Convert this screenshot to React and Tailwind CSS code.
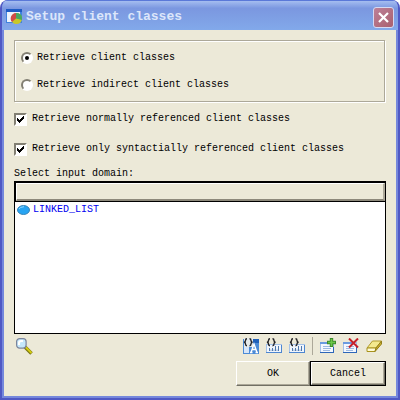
import { useState } from "react";

function AppIcon() {
  return (
    <svg width="16" height="16" viewBox="0 0 16 16" aria-hidden="true">
      <rect x="0" y="0" width="16" height="14" fill="#3f83dd" />
      <rect x="0" y="0" width="16" height="3" fill="#1f5bc4" />
      <rect x="1" y="3" width="13" height="10" fill="#eef3fc" />
      <circle cx="10.500" cy="9.500" r="5.500" fill="#c9c829" />
      <path d="M10 9.500V4A5.500 5.500 0 0 0 6 13Z" fill="#cf4a48" />
      <path d="M10 9.500V4A5.500 5.500 0 0 1 16 11Z" fill="#48a860" />
    </svg>
  );
}

function CloseIcon() {
  return (
    <svg width="11" height="11" viewBox="0 0 11 11" aria-hidden="true">
      <path d="M1 1L10 10M10 1L1 10" stroke="#fff" strokeWidth="2.2" />
    </svg>
  );
}

function EllipseIcon() {
  return (
    <svg width="13" height="10" viewBox="0 0 13 10" aria-hidden="true">
      <ellipse cx="6.5" cy="5" rx="6" ry="4.5" fill="#27a4f2" stroke="#3b86b8" />
      <path d="M2 4Q3 2 7 1.700" stroke="#8fd8ff" fill="none" />
    </svg>
  );
}

function SearchIcon() {
  return (
    <svg width="17" height="17" viewBox="0 0 17 17" aria-hidden="true">
      <path d="M9 9L15.500 15.500" stroke="#77720e" strokeWidth="3.6" />
      <path d="M9.500 9L15.500 15" stroke="#d3cb12" strokeWidth="2" />
      <rect x="0.600" y="0.600" width="9.500" height="9.500" rx="3" fill="#c5e8fb" stroke="#7c859c" strokeWidth="1.2" />
      <path d="M3 7V5Q3 3 5.500 3H7" stroke="#fff" strokeWidth="2" fill="none" />
    </svg>
  );
}

function Braces() {
  return (
    <g fill="none" stroke="#222226" strokeWidth="1.4">
      <path d="M4 0.800Q2.500 0.800 2.500 2.500Q2.500 4 1 4.200Q2.500 4.500 2.500 6Q2.500 7.700 4 7.700" />
      <path d="M6.500 0.800Q8 0.800 8 2.500Q8 4 9.500 4.200Q8 4.500 8 6Q8 7.700 6.500 7.700" />
    </g>
  );
}

function ClassTextIcon() {
  return (
    <svg width="16" height="16" viewBox="0 0 16 16" aria-hidden="true">
      <rect x="0" y="1" width="16" height="15" fill="#4b8ad6" />
      <rect x="10" y="1" width="6" height="4" fill="#1f5fb8" />
      <rect x="1" y="0" width="9" height="9" fill="#e4e9ea" />
      <rect x="1" y="9" width="5" height="6" fill="#d6e5f8" />
      <path d="M8 14.500L11 6L14 14.500M9 11.500H13M7 14.500H9.500M12.500 14.500H15" stroke="#fff" strokeWidth="1.4" fill="none" />
      <Braces />
    </svg>
  );
}

function ClassRulerIcon() {
  return (
    <svg width="16" height="16" viewBox="0 0 16 16" aria-hidden="true">
      <rect x="0.500" y="6.500" width="15" height="8" fill="#f0f5fc" stroke="#a4c1e8" />
      <path d="M0 14.500H16M15.500 7V15" stroke="#4d86d0" />
      <path d="M3.500 10V13M6.500 10V13M9.500 8V13M12.500 8V13" stroke="#4f78ac" />
      <path d="M5 11.500V13M8 11.500V13M11 11.500V13" stroke="#8fabd0" />
      <Braces />
    </svg>
  );
}

function ListLines() {
  return (
    <g>
      <rect x="0.500" y="4.500" width="13" height="10" fill="#f4f8fe" stroke="#a3bfe8" />
      <rect x="0" y="4" width="9" height="2" fill="#6a9be0" />
      <path d="M0 14.500H14M13.500 9V15" stroke="#2d66b8" />
      <path d="M3 8.500H11M3 10.500H11M3 12.500H10" stroke="#9cb9e2" />
    </g>
  );
}

function AddIcon() {
  return (
    <svg width="16" height="16" viewBox="0 0 16 16" aria-hidden="true">
      <ListLines />
      <path d="M11.500 0V9M7 4.500H16" stroke="#3a8a2a" strokeWidth="3.4" />
      <path d="M11.500 1V8M8 4.500H15" stroke="#6cc748" strokeWidth="1.6" />
    </svg>
  );
}

function RemoveIcon() {
  return (
    <svg width="16" height="16" viewBox="0 0 16 16" aria-hidden="true">
      <ListLines />
      <path d="M6 0.500L15 9.500M15 0.500L6 9.500" stroke="#c5202a" strokeWidth="2" />
    </svg>
  );
}

function EraserIcon() {
  return (
    <svg width="17" height="16" viewBox="0 0 17 16" aria-hidden="true">
      <path d="M1 10L6.500 3H15.500L10 10Z" fill="#f3e98e" stroke="#b09a2c" />
      <path d="M1 10H10L9 13.500H1Z" fill="#fffbd6" stroke="#a8921c" />
      <path d="M10 10L15.500 3V6L9 13.500Z" fill="#cdb02c" stroke="#94801a" />
    </svg>
  );
}

function Radio({ label, checked, onChange }) {
  return (
    <label className="flex h-[27px] items-center gap-1">
      <span className="grid size-3 place-items-center">
        <input
          type="radio"
          name="retrieve"
          checked={checked}
          onChange={onChange}
          className="peer col-start-1 row-start-1 size-3 appearance-none rounded-full border-2 border-t-[#827f73] border-r-white border-b-white border-l-[#827f73] bg-white"
        />
        <span className="pointer-events-none col-start-1 row-start-1 size-1 rounded-full bg-black opacity-0 peer-checked:opacity-100" />
      </span>
      {label}
    </label>
  );
}

function Check({ label }) {
  return (
    <label className="flex h-[30px] items-center gap-[5px]">
      <span className="grid size-[13px] place-items-center">
        <input
          type="checkbox"
          defaultChecked
          className="peer col-start-1 row-start-1 size-[13px] appearance-none border-2 border-t-[#827f73] border-r-white border-b-white border-l-[#827f73] bg-white"
        />
        <svg
          className="pointer-events-none col-start-1 row-start-1 opacity-0 peer-checked:opacity-100"
          width="7" height="7" viewBox="0 0 7 7" shapeRendering="crispEdges" aria-hidden="true"
        >
          <path d="M0 2h1v1h1v1h1v-1h1v-1h1v-1h1v-1h1v3h-1v1h-1v1h-1v1h-1v1h-1v-1h-1v-1h-1z" fill="#000" />
        </svg>
      </span>
      {label}
    </label>
  );
}

function Tool({ label, children }) {
  return (
    <button type="button" aria-label={label} className="flex h-[17px] items-center">
      {children}
    </button>
  );
}

export default function App() {
  const [mode, setMode] = useState("direct");
  return (
    <div className="min-h-screen bg-white font-['Liberation_Mono','Courier_New',monospace] text-[10px] leading-3 text-black">
      <main className="flex min-h-screen flex-col overflow-hidden rounded-t-lg border-2 border-t-0 border-[#5059c4] bg-[#7588dc]">
        <header className="flex h-[30px] items-center gap-1 border-t border-[#5a78d8] bg-linear-to-b from-[#a5bdf0] via-[#7b97e0] via-25% to-[#82a9ea] pt-[3px] pr-1 pl-1">
          <AppIcon />
          <h1 className="flex-1 text-[13px] leading-4 font-bold text-[#dce6fa]">Setup client classes</h1>
          <button
            type="button"
            aria-label="Close"
            className="flex size-[21px] items-center justify-center rounded-[3px] border border-[#d5d9f2] bg-linear-to-br from-[#bd8098] to-[#a9606e]"
          >
            <CloseIcon />
          </button>
        </header>
        <div className="mx-0.5 mb-0.5 flex flex-1 flex-col bg-[#ece9d8] px-2.5 pt-2.5 pb-2.5">
          <fieldset className="mr-px border border-[#aca899] px-1.5 pt-[3px] pb-[3px] shadow-[1px_1px_0_#fff,inset_1px_1px_0_#fff]">
            <Radio label="Retrieve client classes" checked={mode === "direct"} onChange={() => setMode("direct")} />
            <Radio label="Retrieve indirect client classes" checked={mode === "indirect"} onChange={() => setMode("indirect")} />
          </fieldset>
          <div className="pt-0.5">
            <Check label="Retrieve normally referenced client classes" />
            <Check label="Retrieve only syntactially referenced client classes" />
          </div>
          <h2 id="domain" className="pt-1 pb-px">Select input domain:</h2>
          <section aria-labelledby="domain" className="flex-1 border border-black bg-white">
            <div className="border-t border-b border-l border-black">
              <div className="h-[18px] border-t border-r-2 border-b-2 border-l border-t-white border-r-[#aca899] border-b-[#8d897b] border-l-white bg-[#ece9d8]" />
            </div>
            <ul>
              <li className="flex h-4 items-center gap-[3px] pl-0.5 text-[#0000f0]">
                <EllipseIcon />
                LINKED_LIST
              </li>
            </ul>
          </section>
          <div className="flex items-center pt-[3px] pr-[3px] pl-0.5">
            <Tool label="Find"><SearchIcon /></Tool>
            <div className="ml-auto flex items-center gap-[7px]">
              <Tool label="Class text"><ClassTextIcon /></Tool>
              <Tool label="Class features"><ClassRulerIcon /></Tool>
              <Tool label="Class metrics"><ClassRulerIcon /></Tool>
              <span className="h-[18px] w-px bg-[#aca899]" />
              <Tool label="Add"><AddIcon /></Tool>
              <Tool label="Remove"><RemoveIcon /></Tool>
              <Tool label="Clear"><EraserIcon /></Tool>
            </div>
          </div>
          <div className="flex justify-end pt-1.5">
            <button type="button" className="h-[25px] w-[74px] border border-t-white border-r-[#716f64] border-b-[#716f64] border-l-white shadow-[inset_-1px_-1px_0_#aca899]">
              OK
            </button>
            <button type="button" className="w-[76px] border border-black">
              <span className="flex h-[23px] items-center justify-center border border-t-white border-r-[#716f64] border-b-[#716f64] border-l-white shadow-[inset_-1px_-1px_0_#aca899]">
                Cancel
              </span>
            </button>
          </div>
        </div>
      </main>
    </div>
  );
}
